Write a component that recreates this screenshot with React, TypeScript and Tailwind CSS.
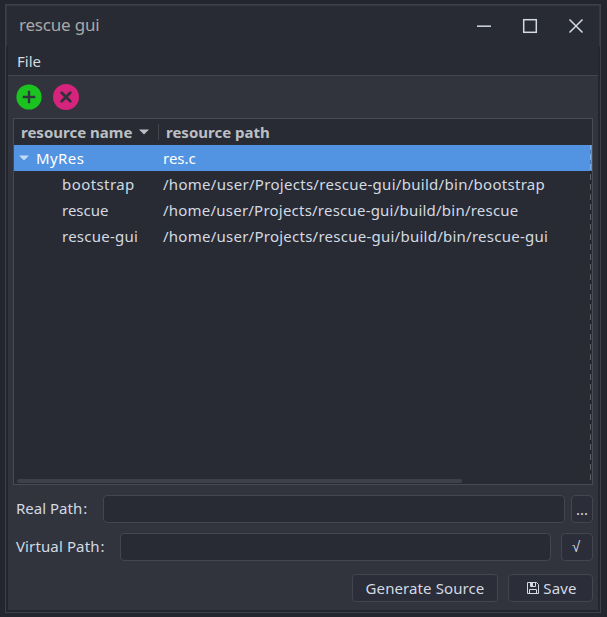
import React from "react";

const rows = [
  { name: "bootstrap", path: "/home/user/Projects/rescue-gui/build/bin/bootstrap", n: "tracking-[0.42px]", p: "tracking-[0.29px]" },
  { name: "rescue", path: "/home/user/Projects/rescue-gui/build/bin/rescue", n: "", p: "tracking-[0.22px]" },
  { name: "rescue-gui", path: "/home/user/Projects/rescue-gui/build/bin/rescue-gui", n: "tracking-[0.25px]", p: "tracking-[0.25px]" },
];

const box = "rounded-[4px] border border-[#43464f] h-7 shrink-0";
const button = box + " bg-[#2b2d38] flex items-center justify-center";

function TitleBar() {
  return (
    <div className="flex h-[41px] shrink-0 items-center border-x border-t border-[#353840] bg-[#282b33] pl-3 text-[17px] text-[#a9a9a9]">
      <span className="flex-1 pb-[2px] tracking-[-0.2px]">rescue gui</span>
      <svg width="124" height="40" viewBox="0 0 124 40" fill="none" stroke="#d3dae3" strokeWidth="1.5">
        <path d="M2 20.2H16" />
        <rect x="48.7" y="13.7" width="12.6" height="12.6" />
        <path d="M94.5 13.5L107.5 26.5M107.5 13.5L94.5 26.5" />
      </svg>
    </div>
  );
}

function Toolbar() {
  return (
    <div className="flex h-[42px] gap-[11px] pl-2 pt-2">
      <svg width="26" height="26" viewBox="0 0 26 26">
        <circle cx="13" cy="13" r="12.6" fill="#1bc321" />
        <path d="M13 6.7V19.3M6.7 13H19.3" stroke="#30353c" strokeWidth="2.4" />
      </svg>
      <svg width="26" height="26" viewBox="0 0 26 26">
        <circle cx="13" cy="13" r="13" fill="#d6237b" />
        <path d="M8.7 8.7L17.3 17.3M17.3 8.7L8.7 17.3" stroke="#30313c" strokeWidth="2.8" strokeLinecap="round" />
      </svg>
    </div>
  );
}

function ResourceTree() {
  return (
    <div className="relative ml-[5px] flex h-[367px] w-[580px] flex-col border border-[#484b53] bg-[#282b33]">
      <div className="flex h-[26px] items-center font-bold text-[#bcbfc4]">
        <div className="flex h-4 w-[145px] items-center border-r border-[#42454d] pl-[7px]">
          <span className="w-[113px] whitespace-nowrap">resource name</span>
          <svg className="ml-[5px]" width="10" height="6" viewBox="0 0 10 6"><path d="M0 .5H10L5 5.5Z" fill="#bcbfc4" /></svg>
        </div>
        <span className="pl-[7px]">resource path</span>
      </div>
      <div className="flex h-[26px] items-center bg-[#5294e2] text-white">
        <svg className="ml-[5px] mr-[7px]" width="10" height="6" viewBox="0 0 10 6"><path d="M0 .5H10L5 5.5Z" fill="#c3daf4" /></svg>
        <span className="w-[127px] tracking-[0.4px]">MyRes</span>
        <span>res.c</span>
      </div>
      {rows.map((row) => (
        <div key={row.name} className="flex h-[26px] items-center pl-12">
          <span className={"w-[101px] " + row.n}>{row.name}</span>
          <span className={"whitespace-nowrap " + row.p}>{row.path}</span>
        </div>
      ))}
      <div className="ml-[3px] mt-auto mb-px h-1 w-[445px] rounded-full bg-[#3e414a]" />
      <div className="absolute right-px top-[26px] h-[335px] w-px bg-[repeating-linear-gradient(to_bottom,#ffffff40_0px,#ffffff40_5px,#00000033_5px,#00000033_9px,#ffffff40_9px,#ffffff40_10px)]" />
    </div>
  );
}

export default function App() {
  return (
    <div className="h-[617px] w-[607px] overflow-hidden bg-[#23262e] pl-[5px] pt-1 font-['Noto_Sans',sans-serif] text-[15px] leading-5 text-[#d3dae3]">
      <div className="flex h-[609px] w-[596px] flex-col border border-[#3d4048] bg-[#23262e]">
        <TitleBar />
        <div className="mx-[2px] mb-[2px] flex flex-1 flex-col bg-[#31343d]">
          <div className="h-[30px] shrink-0 border-b border-[#43464e] bg-[#282b33] pl-[9px] pt-[5px]">File</div>
          <Toolbar />
          <ResourceTree />
          <div className="mt-[10px] flex h-7 items-center pl-2">
            <span className="w-[87px] pb-[2px]">Real Path<span className="ml-px">:</span></span>
            <div className={box + " w-[462px] bg-[#282b33]"} />
            <div className={button + " ml-[6px] w-[22px]"}>...</div>
          </div>
          <div className="mt-[10px] flex h-7 items-center pl-2">
            <span className="w-[104px] pb-[2px] tracking-[0.12px]">Virtual Path<span className="ml-px">:</span></span>
            <div className={box + " w-[431px] bg-[#282b33]"} />
            <div className={button + " ml-[10px] w-8 pr-[2px] font-['Liberation_Sans',sans-serif]"}>√</div>
          </div>
          <div className="mt-[13px] flex h-7 justify-end gap-[10px] pr-[5px]">
            <div className={button + " w-[146px] tracking-[0.1px]"}>Generate Source</div>
            <div className={button + " w-[85px] gap-1 pl-[3px] tracking-[0.2px]"}>
              <svg width="12" height="12" viewBox="0 0 12 12" fill="none" stroke="#d3dae3">
                <path d="M.5 .5H9.5L11.5 2.5V11.5H.5ZM3.5 .5V4.5H8.5V.5M2.5 11.5V7.5H9.5V11.5" />
                <path d="M4 1H6V4H4Z" fill="#d3dae3" stroke="none" />
              </svg>
              Save
            </div>
          </div>
        </div>
      </div>
    </div>
  );
}
